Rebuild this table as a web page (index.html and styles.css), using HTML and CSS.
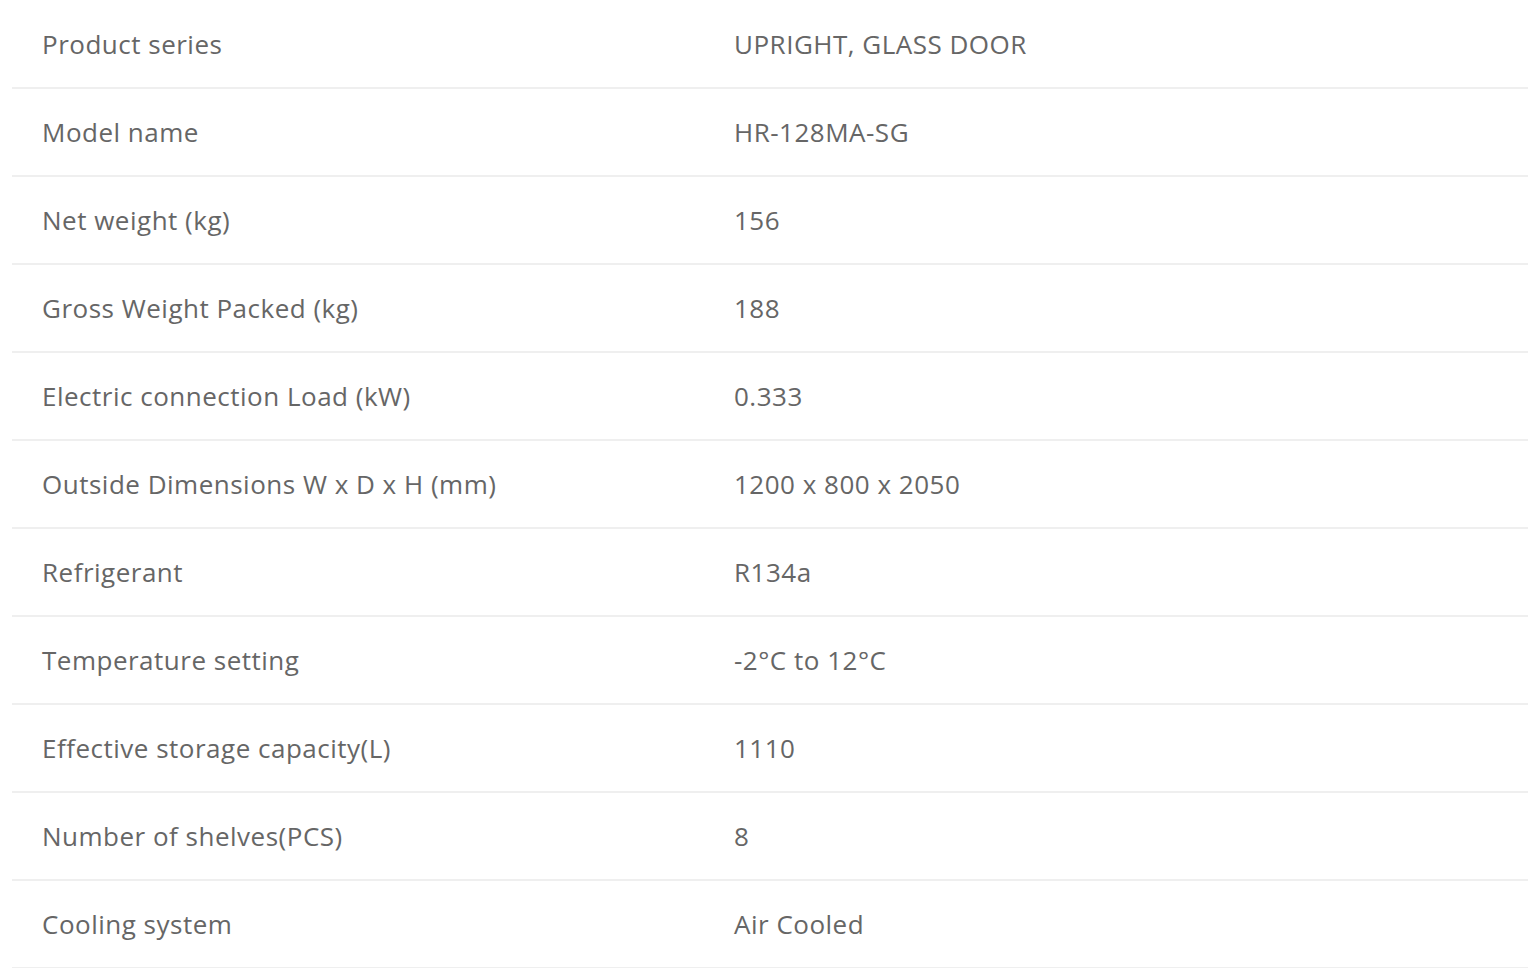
FILE: index.html
```html
<!DOCTYPE html>
<html>
<head>
<meta charset="utf-8">
<link rel="stylesheet" href="styles.css">
</head>
<body>
<div class="specs">
  <div class="row"><div class="label">Product series</div><div class="value">UPRIGHT, GLASS DOOR</div></div>
  <div class="row"><div class="label">Model name</div><div class="value">HR-128MA-SG</div></div>
  <div class="row"><div class="label">Net weight (kg)</div><div class="value">156</div></div>
  <div class="row"><div class="label">Gross Weight Packed (kg)</div><div class="value">188</div></div>
  <div class="row"><div class="label">Electric connection Load (kW)</div><div class="value">0.333</div></div>
  <div class="row"><div class="label">Outside Dimensions W x D x H (mm)</div><div class="value">1200 x 800 x 2050</div></div>
  <div class="row"><div class="label">Refrigerant</div><div class="value">R134a</div></div>
  <div class="row"><div class="label">Temperature setting</div><div class="value">-2°C to 12°C</div></div>
  <div class="row"><div class="label">Effective storage capacity(L)</div><div class="value">1110</div></div>
  <div class="row"><div class="label">Number of shelves(PCS)</div><div class="value">8</div></div>
  <div class="row"><div class="label">Cooling system</div><div class="value">Air Cooled</div></div>
</div>
</body>
</html>
```
FILE: styles.css
```css
html, body {
  margin: 0;
  padding: 0;
  background: #fff;
}
body {
  font-family: "Open Sans", sans-serif;
  color: #666;
}
.specs {
  margin-left: 12px;
  padding-top: 1px;
  width: 1516px;
}
.row {
  display: flex;
  align-items: center;
  height: 86px;
  border-bottom: 2px solid #efefef;
  font-size: 26px;
  letter-spacing: 0.5px;
}
.label {
  width: 692px;
  padding-left: 30px;
  box-sizing: border-box;
}
.value {
  padding-left: 30px;
}
```
